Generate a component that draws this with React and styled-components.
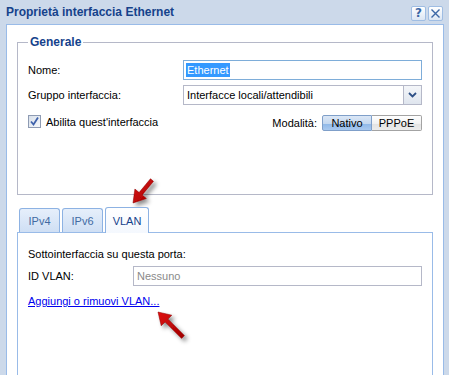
import React from "react";
import styled, { createGlobalStyle } from "styled-components";

const GlobalStyle = createGlobalStyle`
  html, body {
    margin: 0;
    padding: 0;
    background: #fff;
  }
  body {
    font-family: "Liberation Sans", Arial, sans-serif;
    font-size: 11px;
    color: #000;
  }
`;

// arrow polygon from tail to tip
const arrowPoints = (tail, tip, shaft = 2, headLen = 12, headHalf = 7.5) => {
  const dx = tip[0] - tail[0];
  const dy = tip[1] - tail[1];
  const len = Math.hypot(dx, dy);
  const ux = dx / len;
  const uy = dy / len;
  const nx = -uy;
  const ny = ux;
  const bx = tip[0] - ux * headLen;
  const by = tip[1] - uy * headLen;
  const pts = [
    [tail[0] + nx * shaft, tail[1] + ny * shaft],
    [bx + nx * shaft, by + ny * shaft],
    [bx + nx * headHalf, by + ny * headHalf],
    tip,
    [bx - nx * headHalf, by - ny * headHalf],
    [bx - nx * shaft, by - ny * shaft],
    [tail[0] - nx * shaft, tail[1] - ny * shaft],
  ];
  return pts.map((p) => p[0].toFixed(1) + "," + p[1].toFixed(1)).join(" ");
};

const App = () => {
  return (
    <>
      <GlobalStyle />
      <Window>
        <TitleBar>
          <Title>Proprietà interfaccia Ethernet</Title>
          <ToolButtons>
            <ToolButton>
              <HelpMark>?</HelpMark>
            </ToolButton>
            <ToolButton>
              <svg width="11" height="11" viewBox="0 0 11 11">
                <path d="M1.5 1.5 L9.5 9.5 M9.5 1.5 L1.5 9.5" stroke="#3b67a6" strokeWidth="1.4" fill="none" />
              </svg>
            </ToolButton>
          </ToolButtons>
        </TitleBar>

        <Body>
          <Fieldset>
            <Legend>Generale</Legend>
            <Row>
              <Label>Nome:</Label>
              <Field $focus>
                <Selected>Ethernet</Selected>
              </Field>
            </Row>
            <Row $gap={10}>
              <Label>Gruppo interfaccia:</Label>
              <Field>
                <FieldText>Interfacce locali/attendibili</FieldText>
                <Trigger>
                  <svg width="9" height="6" viewBox="0 0 9 6">
                    <path d="M1 1 L4.5 4.5 L8 1" stroke="#2d4f86" strokeWidth="1.8" fill="none" />
                  </svg>
                </Trigger>
              </Field>
            </Row>
            <CheckRow>
              <CheckLabel>
                <CheckBox>
                  <svg width="11" height="11" viewBox="0 0 11 11">
                    <path d="M2 5.5 L4.5 8.5 L9 1.5" stroke="#3f62ab" strokeWidth="1.8" fill="none" />
                  </svg>
                </CheckBox>
                Abilita quest'interfaccia
              </CheckLabel>
              <ModeGroup>
                Modalità:
                <Segments>
                  <Segment $active>Nativo</Segment>
                  <Segment>PPPoE</Segment>
                </Segments>
              </ModeGroup>
            </CheckRow>
          </Fieldset>

          <TabStrip>
            <Tab $w={41}>IPv4</Tab>
            <Tab $w={41}>IPv6</Tab>
            <Tab $w={44} $active>
              VLAN
            </Tab>
          </TabStrip>
          <TabPanel>
            <Line>Sottointerfaccia su questa porta:</Line>
            <Row>
              <Label $w={105}>ID VLAN:</Label>
              <PlainInput placeholder="Nessuno" readOnly />
            </Row>
            <LinkText href="#">Aggiungi o rimuovi VLAN...</LinkText>
          </TabPanel>
        </Body>

        <Overlay width="449" height="375" viewBox="0 0 449 375">
          <defs>
            <filter id="shadow" x="-50%" y="-50%" width="200%" height="200%">
              <feDropShadow dx="3" dy="3" stdDeviation="2" floodColor="#000" floodOpacity="0.45" />
            </filter>
            <linearGradient id="red" x1="0" y1="0" x2="1" y2="1">
              <stop offset="0" stopColor="#e01010" />
              <stop offset="1" stopColor="#a00000" />
            </linearGradient>
          </defs>
          <polygon points={arrowPoints([152, 180], [133, 203])} fill="url(#red)" stroke="#8a0000" strokeWidth="0.5" filter="url(#shadow)" />
          <polygon points={arrowPoints([183, 337], [158, 312])} fill="url(#red)" stroke="#8a0000" strokeWidth="0.5" filter="url(#shadow)" />
        </Overlay>
      </Window>
    </>
  );
};

export default App;

const Window = styled.div`
  position: relative;
  width: 449px;
  height: 375px;
  box-sizing: border-box;
  padding: 0 5px 0 6px;
  background: #ccd9ea;
  overflow: hidden;
  display: flex;
  flex-direction: column;
`;

const TitleBar = styled.div`
  height: 24px;
  flex: none;
  display: flex;
  align-items: center;
  justify-content: space-between;
  padding-right: 1px;
`;

const Title = styled.div`
  font: bold 12px "Liberation Sans", Arial, sans-serif;
  color: #15428b;
`;

const ToolButtons = styled.div`
  display: flex;
  gap: 2px;
  margin-top: 2px;
`;

const ToolButton = styled.div`
  width: 15px;
  height: 15px;
  box-sizing: border-box;
  border: 1px solid #9fbde3;
  border-radius: 2px;
  background: linear-gradient(#ffffff, #dbe6f4);
  display: flex;
  align-items: center;
  justify-content: center;
`;

const HelpMark = styled.span`
  font: bold 12px "DejaVu Sans", sans-serif;
  color: #3b67a6;
  line-height: 1;
`;

const Body = styled.div`
  flex: 1 0 auto;
  min-height: 400px;
  background: #fff;
  border: 1px solid #99bbe8;
  padding: 0 10px;
  display: flex;
  flex-direction: column;
`;

const Fieldset = styled.fieldset`
  margin: 10px 0 0;
  padding: 11px 10px 63px;
  border: 1px solid #b5b8c8;
  min-width: 0;
`;

const Legend = styled.legend`
  padding: 0 2px;
  font: bold 12px/14px "Liberation Sans", Arial, sans-serif;
  color: #15428b;
`;

const Row = styled.div`
  display: flex;
  align-items: center;
  height: 20px;
  margin-bottom: ${(p) => p.$gap ?? 5}px;
`;

const Label = styled.label`
  width: ${(p) => p.$w ?? 155}px;
  flex: none;
`;

const Field = styled.div`
  flex: 1;
  height: 20px;
  box-sizing: border-box;
  border: 1px solid ${(p) => (p.$focus ? "#7eadd9" : "#b5b8c8")};
  display: flex;
  align-items: center;
  padding-left: 2px;
`;

const Selected = styled.span`
  background: #3399ff;
  color: #fff;
  padding: 1px 1px;
`;

const FieldText = styled.span`
  flex: 1;
  padding-left: 1px;
`;

const Trigger = styled.div`
  width: 17px;
  height: 18px;
  border-left: 1px solid #b5b8c8;
  background: linear-gradient(#f4f6f9, #dfe5ee);
  display: flex;
  align-items: center;
  justify-content: center;
`;

const CheckRow = styled.div`
  display: flex;
  align-items: center;
  justify-content: space-between;
  height: 16px;
`;

const CheckLabel = styled.label`
  display: flex;
  align-items: center;
  align-self: flex-start;
  height: 13px;
  gap: 5px;
`;

const CheckBox = styled.span`
  width: 13px;
  height: 13px;
  box-sizing: border-box;
  border: 1px solid #8e9bb3;
  background: linear-gradient(135deg, #d8e0ea, #f6f8fb);
  display: flex;
  align-items: center;
  justify-content: center;
`;

const ModeGroup = styled.div`
  display: flex;
  align-items: center;
  gap: 5px;
`;

const Segments = styled.div`
  display: flex;
`;

const Segment = styled.div`
  width: 50px;
  height: 16px;
  box-sizing: border-box;
  display: flex;
  align-items: center;
  justify-content: center;
  border: 1px solid ${(p) => (p.$active ? "#7f9fc9" : "#a3a3a3")};
  border-radius: ${(p) => (p.$active ? "2px 0 0 2px" : "0 2px 2px 0")};
  border-left-width: ${(p) => (p.$active ? 1 : 0)}px;
  background: ${(p) =>
    p.$active
      ? "linear-gradient(#dbe7f6 0%, #c3d7ef 55%, #8fb8e8 56%, #a9c9ef 100%)"
      : "linear-gradient(#ffffff 0%, #f1f1f1 55%, #e3e3e3 56%, #ececec 100%)"};
  color: #000;
`;

const TabStrip = styled.div`
  display: flex;
  align-items: flex-end;
  gap: 2px;
  padding-left: 2px;
  margin-top: 12px;
`;

const Tab = styled.div`
  position: relative;
  z-index: ${(p) => (p.$active ? 1 : 0)};
  width: ${(p) => p.$w}px;
  height: ${(p) => (p.$active ? 26 : 24)}px;
  margin-bottom: ${(p) => (p.$active ? -1 : 0)}px;
  box-sizing: border-box;
  border: 1px solid #8db2e3;
  border-bottom: none;
  border-radius: 3px 3px 0 0;
  background: ${(p) =>
    p.$active ? "linear-gradient(#ffffff, #f4f8fe)" : "linear-gradient(#e6effb, #cfdff4)"};
  color: ${(p) => (p.$active ? "#15428b" : "#416aa3")};
  display: flex;
  align-items: center;
  justify-content: center;
  padding-top: ${(p) => (p.$active ? 1 : 0)}px;
`;

const TabPanel = styled.div`
  flex: 1;
  border: 1px solid #99bbe8;
  padding: 14px 10px;
`;

const Line = styled.div`
  line-height: 14px;
  margin-bottom: 5px;
`;

const PlainInput = styled.input`
  flex: 1;
  min-width: 0;
  height: 20px;
  box-sizing: border-box;
  border: 1px solid #b5b8c8;
  padding: 0 3px;
  font: 11px "Liberation Sans", Arial, sans-serif;
  outline: none;

  &::placeholder {
    color: #8a8a8a;
  }
`;

const LinkText = styled.a`
  display: inline-block;
  margin-top: 3px;
  color: #0000ee;
  text-decoration: underline;
  line-height: 14px;
`;

const Overlay = styled.svg`
  position: absolute;
  left: 0;
  top: 0;
  pointer-events: none;
`;
